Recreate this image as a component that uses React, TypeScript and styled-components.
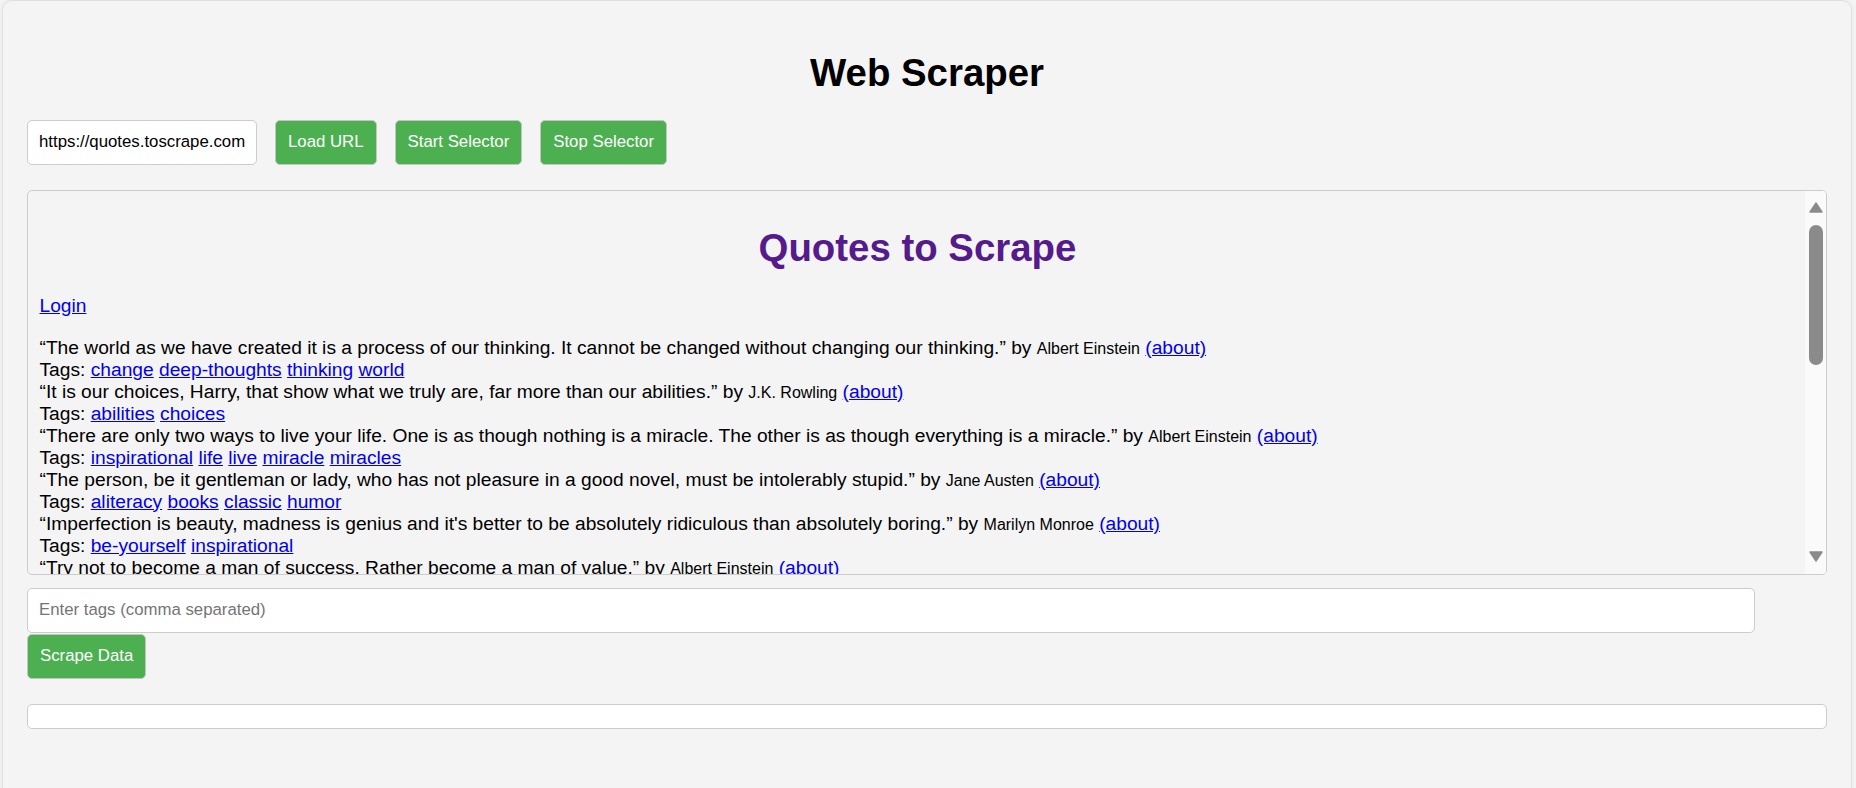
import React, { useState } from 'react';
import styled, { createGlobalStyle } from 'styled-components';

const GlobalStyle = createGlobalStyle`
  html, body {
    margin: 0;
    padding: 0;
    background: #f4f4f4;
  }
  body {
    font-family: 'Liberation Sans', Arial, sans-serif;
  }
  * {
    box-sizing: border-box;
  }
`;

const Page = styled.div`
  padding: 0 4px 0 2px;
`;

const Container = styled.div`
  min-height: 800px;
  padding: 24px;
  background: #f4f4f4;
  border: 1px solid #e0e0e0;
  border-radius: 10px;
  box-shadow: 0 0 6px rgba(0, 0, 0, 0.05);
`;

const Title = styled.h1`
  margin: 25.6px 0 25px;
  font-size: 38.4px;
  font-weight: bold;
  text-align: center;
  color: #000;
`;

const Controls = styled.div`
  display: flex;
  align-items: flex-start;
  gap: 18px;
  margin-bottom: 25px;
`;

const TextInput = styled.input<{ $wide?: boolean }>`
  display: block;
  width: ${(p) => (p.$wide ? '96%' : '230px')};
  height: 45px;
  padding: 0 11px;
  background: #fff;
  border: 1px solid #ccc;
  border-radius: 5px;
  font-family: 'Liberation Sans', Arial, sans-serif;
  font-size: 16.8px;
  color: #000;
  outline: none;

  &::placeholder {
    color: #757575;
  }
`;

const Button = styled.button`
  display: block;
  height: 45px;
  padding: 0 12px;
  background: #4caf50;
  color: #fff;
  border: 1px solid #c4c4c4;
  border-radius: 5px;
  font-family: 'Liberation Sans', Arial, sans-serif;
  font-size: 16.8px;
  cursor: pointer;
`;

const TagsBlock = styled.div`
  margin-top: 13px;

  ${Button} {
    margin-top: 1px;
  }
`;

// fake iframe: the loaded page plus its scrollbar
const Preview = styled.div`
  display: flex;
  height: 385px;
  background: #f4f4f4;
  border: 1px solid #ccc;
  border-radius: 5px;
  overflow: hidden;
`;

const Viewport = styled.div`
  flex: 1;
  min-width: 0;
  overflow: hidden;
`;

const ScrollRail = styled.div`
  display: flex;
  flex-direction: column;
  width: 21px;
  background: #fafafa;
`;

const ScrollArrow = styled.div`
  display: flex;
  align-items: center;
  justify-content: center;
  height: 34px;
  flex-shrink: 0;
`;

const ScrollTrack = styled.div`
  flex: 1;
`;

const ScrollThumb = styled.div`
  width: 13.5px;
  height: 140px;
  margin-left: 4px;
  background: #8b8b8b;
  border-radius: 7px;
`;

const Doc = styled.div`
  padding: 9.6px 9.6px 9.6px 11.5px;
  font-family: 'Liberation Sans', Arial, sans-serif;
  font-size: 19.2px;
  color: #000;
`;

const DocTitle = styled.h1`
  margin: 25.6px 0;
  font-size: 38.4px;
  text-align: center;

  a {
    color: #551a8b;
    text-decoration: none;
  }
`;

const DocPara = styled.p`
  margin: 19.2px 0;
`;

const DocSubtitle = styled.h2`
  margin: 23.9px 0;
  font-size: 28.8px;
`;

const Link = styled.a`
  color: #0000ee;
  text-decoration: underline;
`;

const Author = styled.small`
  font-size: 16px;
`;

const Results = styled.div`
  height: 25px;
  margin-top: 25px;
  background: #fff;
  border: 1px solid #ccc;
  border-radius: 5px;
`;

const quotes = [
	{
		text: 'The world as we have created it is a process of our thinking. It cannot be changed without changing our thinking.',
		author: 'Albert Einstein',
		tags: ['change', 'deep-thoughts', 'thinking', 'world'],
	},
	{
		text: 'It is our choices, Harry, that show what we truly are, far more than our abilities.',
		author: 'J.K. Rowling',
		tags: ['abilities', 'choices'],
	},
	{
		text: 'There are only two ways to live your life. One is as though nothing is a miracle. The other is as though everything is a miracle.',
		author: 'Albert Einstein',
		tags: ['inspirational', 'life', 'live', 'miracle', 'miracles'],
	},
	{
		text: 'The person, be it gentleman or lady, who has not pleasure in a good novel, must be intolerably stupid.',
		author: 'Jane Austen',
		tags: ['aliteracy', 'books', 'classic', 'humor'],
	},
	{
		text: "Imperfection is beauty, madness is genius and it's better to be absolutely ridiculous than absolutely boring.",
		author: 'Marilyn Monroe',
		tags: ['be-yourself', 'inspirational'],
	},
	{
		text: 'Try not to become a man of success. Rather become a man of value.',
		author: 'Albert Einstein',
		tags: ['adulthood', 'success', 'value'],
	},
	{
		text: 'It is better to be hated for what you are than to be loved for what you are not.',
		author: 'André Gide',
		tags: ['life', 'love'],
	},
];

function Arrow({ down }: { down?: boolean }) {
	return (
		<svg width="14" height="11" viewBox="0 0 14 11">
			<polygon
				points={down ? '1,1 13,1 7,10' : '7,1 13,10 1,10'}
				fill="#8b8b8b"
				stroke="#8b8b8b"
				strokeWidth="1.4"
				strokeLinejoin="round"
			/>
		</svg>
	);
}

function App() {
	const [url, setUrl] = useState('https://quotes.toscrape.com');
	const [tags, setTags] = useState('');

	return (
		<>
			<GlobalStyle />
			<Page>
				<Container>
					<Title>Web Scraper</Title>
					<Controls>
						<TextInput value={url} onChange={(e) => setUrl(e.target.value)} />
						<Button>Load URL</Button>
						<Button>Start Selector</Button>
						<Button>Stop Selector</Button>
					</Controls>

					<Preview>
						<Viewport>
							<Doc>
								<DocTitle>
									<a href="#">Quotes to Scrape</a>
								</DocTitle>
								<DocPara>
									<Link href="#">Login</Link>
								</DocPara>
								{quotes.map((q) => (
									<div key={q.text}>
										<span>“{q.text}”</span>{' '}
										<span>
											by <Author>{q.author}</Author> <Link href="#">(about)</Link>
										</span>
										<div>
											Tags:{' '}
											{q.tags.map((t, i) => (
												<React.Fragment key={t}>
													{i > 0 && ' '}
													<Link href="#">{t}</Link>
												</React.Fragment>
											))}
										</div>
									</div>
								))}
								<DocSubtitle>Top Ten tags</DocSubtitle>
							</Doc>
						</Viewport>
						<ScrollRail>
							<ScrollArrow>
								<Arrow />
							</ScrollArrow>
							<ScrollTrack>
								<ScrollThumb />
							</ScrollTrack>
							<ScrollArrow>
								<Arrow down />
							</ScrollArrow>
						</ScrollRail>
					</Preview>

					<TagsBlock>
						<TextInput
							$wide
							placeholder="Enter tags (comma separated)"
							value={tags}
							onChange={(e) => setTags(e.target.value)}
						/>
						<Button>Scrape Data</Button>
					</TagsBlock>

					<Results />
				</Container>
			</Page>
		</>
	);
}

export default App;
